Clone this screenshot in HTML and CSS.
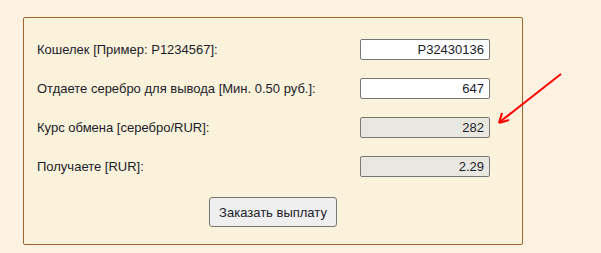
FILE: index.html
```html
<!DOCTYPE html>
<html>
<head>
    <meta charset="utf-8">
    <link rel="stylesheet" href="styles.css">
</head>
<body>
    <form class="payout">
        <div class="row">
            <label class="label">Кошелек [Пример: P1234567]:</label>
            <input class="field" type="text" value="P32430136">
        </div>
        <div class="row">
            <label class="label">Отдаете серебро для вывода [Мин. 0.50 руб.]:</label>
            <input class="field" type="text" value="647">
        </div>
        <div class="row">
            <label class="label">Курс обмена [серебро/RUR]:</label>
            <input class="field readonly" type="text" value="282" readonly>
        </div>
        <div class="row">
            <label class="label">Получаете [RUR]:</label>
            <input class="field readonly" type="text" value="2.29" readonly>
        </div>
        <div class="actions">
            <button class="button" type="button">Заказать выплату</button>
        </div>
    </form>

    <!-- red pointer drawn over the form -->
    <svg class="pointer" width="80" height="60" viewBox="0 0 80 60">
        <line x1="71" y1="4" x2="11" y2="51" stroke="#f00" stroke-width="2"/>
        <path d="M9 53 L12 43 M9 53 L19 50" stroke="#f00" stroke-width="2.2" fill="none"/>
    </svg>
</body>
</html>
```

FILE: styles.css
```css
body {
    margin: 0;
    padding: 17px 0 0 23px;
    background: #fdf1e2;
    font-family: "Liberation Sans", Arial, sans-serif;
    font-size: 13px;
    color: #1c1c2a;
    position: relative;
    min-height: 253px;
    box-sizing: border-box;
}

.payout {
    width: 500px;
    border: 1px solid #a0652f;
    border-radius: 2px;
    background: #faf2da;
    padding: 21px 32px 17px 13px;
    box-sizing: border-box;
    display: flex;
    flex-direction: column;
    gap: 18px;
}

.row {
    display: flex;
    align-items: center;
    justify-content: space-between;
}

.label {
    line-height: 16px;
}

.field {
    width: 130px;
    height: 21px;
    box-sizing: border-box;
    border: 1px solid #777;
    border-radius: 2px;
    background: #fff;
    padding: 0 5px;
    font-family: "Liberation Sans", Arial, sans-serif;
    font-size: 13px;
    color: #1c1c2a;
    text-align: right;
}

.field.readonly {
    background: #e9e8e0;
}

.actions {
    display: flex;
    justify-content: center;
    padding: 2px 0 0 19px;
}

.button {
    width: 128px;
    height: 30px;
    border: 1px solid #777;
    border-radius: 3px;
    background: #efefef;
    font-family: "Liberation Sans", Arial, sans-serif;
    font-size: 13px;
    color: #1c1c2a;
    padding: 0;
}

.pointer {
    position: absolute;
    left: 490px;
    top: 70px;
}
```
